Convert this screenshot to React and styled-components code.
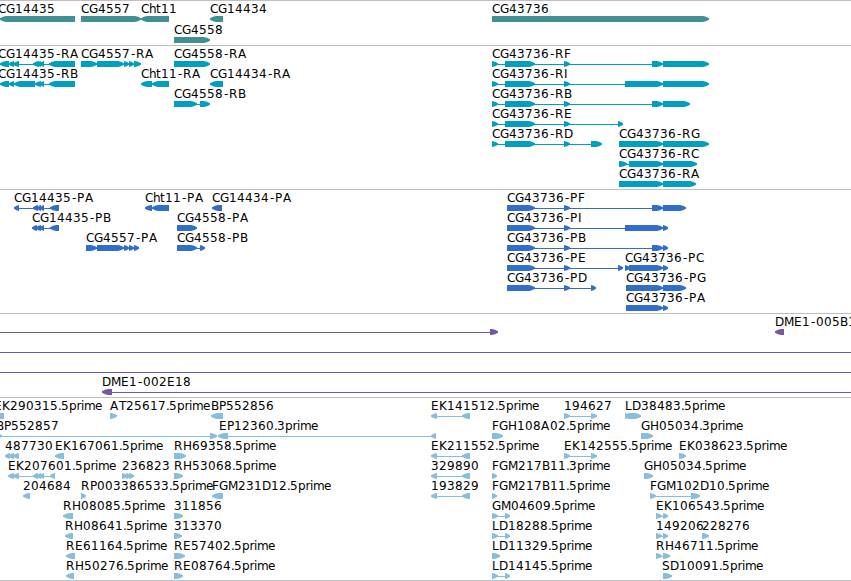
import React from "react";
import styled, { createGlobalStyle } from "styled-components";

const GlobalStyle = createGlobalStyle`
  html, body { margin: 0; padding: 0; background: #fff; overflow: hidden; }
`;

const Browser = styled.main`
  display: flex;
  flex-direction: column;
  width: 851px;
  height: 581px;
  overflow: hidden;
  background: #fff;
`;

const TrackPanel = styled.section`
  box-sizing: border-box;
  flex: 0 0 ${(p) => p.$height}px;
  border-top: 1px solid #bebebe;
  overflow: hidden;
`;

const TrackChart = styled.svg`
  display: block;
  color: ${(p) => p.$color};
`;

const FeatureLabel = styled.text`
  font-family: "DejaVu Sans", sans-serif;
  font-size: 12px;
  fill: #000;
  white-space: pre;
`;

const Connector = styled.rect`
  fill: currentColor;
  shape-rendering: crispEdges;
`;

const Segment = styled.polygon`
  fill: currentColor;
`;

// Whole-pixel glyph advances for the label font.
const ADVANCE = {
  A: 9, B: 8, C: 8, D: 9, E: 8, F: 7, G: 9, H: 9, K: 8, L: 7, M: 10, P: 7, R: 9, S: 8, T: 7,
  h: 7, t: 5, p: 7.5, r: 4.5, i: 3, m: 11, e: 7, ".": 3, "-": 6,
};

const glyphPositions = (text, start) => {
  let x = start;
  return [...text].map((c, i) => {
    const shift = c === "-" || (c !== "5" && text[i - 1] === "P" && i === text.length - 1) ? 1 : 0;
    const at = x + shift;
    x += ADVANCE[c] || 8;
    return at;
  }).join(" ");
};

const segmentPoints = (x0, x1, y, dir) => {
  const head = Math.min(x1 - x0, 6);
  const tip = dir === "R" ? x1 : x0;
  const tail = dir === "R" ? x0 : x1;
  const s = dir === "R" ? -1 : 1;
  return [
    [tail, y], [tip + s * head, y], [tip + s * head * 0.5, y + 0.7],
    [tip, y + 2.2], [tip, y + 3.8],
    [tip + s * head * 0.5, y + 5.3], [tip + s * head, y + 6], [tail, y + 6],
  ].map((p) => p.join(",")).join(" ");
};

// Feature: [row, label, label x, direction, segments, optional connector range]
const S = [[492, 498], [505, 535], [564, 570]];
const P = [[507, 535], [564, 570]];
const EK = [[431, 437], [462, 470]];

const TRACKS = [
  {
    id: "gene", height: 45, pitch: 21, color: "#3f8f94",
    features: [
      [0, "CG14435", -2, "L", [[0, 75]]],
      [0, "CG4557", 81, "R", [[81, 141]]],
      [0, "Cht11", 141, "L", [[141, 169]]],
      [1, "CG4558", 174, "R", [[174, 210]]],
      [0, "CG14434", 210, "L", [[210, 223]]],
      [0, "CG43736", 492, "R", [[492, 709]]],
    ],
  },
  {
    id: "transcript", height: 144, pitch: 20, color: "#009fc1",
    features: [
      [0, "CG14435-RA", -2, "L", [[0, 9], [9, 14], [13, 19], [33, 39], [37, 41], [40, 44], [49, 75]]],
      [1, "CG14435-RB", -2, "L", [[0, 9], [9, 14], [14, 35], [35, 41], [40, 44], [49, 75]]],
      [0, "CG4557-RA", 81, "R", [[81, 97], [97, 124], [124, 129], [129, 134], [134, 141]]],
      [1, "Cht11-RA", 141, "L", [[141, 152], [152, 169]]],
      [1, "CG14434-RA", 210, "L", [[210, 223]]],
      [0, "CG4558-RA", 174, "R", [[174, 210]]],
      [2, "CG4558-RB", 174, "R", [[174, 197], [200, 210]]],
      [0, "CG43736-RF", 492, "R", [...S, [652, 663], [663, 709]]],
      [1, "CG43736-RI", 492, "R", [...S, [625, 663], [663, 709]]],
      [2, "CG43736-RB", 492, "R", [...S, [652, 663], [663, 690]]],
      [3, "CG43736-RE", 492, "R", [...S, [618, 623]]],
      [4, "CG43736-RD", 492, "R", [...S, [591, 602]]],
      [4, "CG43736-RG", 619, "R", [[619, 663], [663, 709]]],
      [5, "CG43736-RC", 619, "R", [[619, 627], [629, 663], [663, 697]]],
      [6, "CG43736-RA", 619, "R", [[619, 663], [663, 696]]],
    ],
  },
  {
    id: "protein", height: 124, pitch: 20, color: "#316dcb",
    features: [
      [0, "CG14435-PA", 14, "L", [[14, 19], [33, 38], [37, 41], [40, 44], [50, 59]]],
      [1, "CG14435-PB", 32, "L", [[32, 37], [36, 41], [40, 44], [50, 59]]],
      [2, "CG4557-PA", 86, "R", [[86, 97], [97, 124], [124, 129], [129, 134], [134, 139]]],
      [0, "Cht11-PA", 145, "L", [[145, 152], [152, 169]]],
      [0, "CG14434-PA", 212, "L", [[212, 222]]],
      [1, "CG4558-PA", 177, "R", [[177, 197]]],
      [2, "CG4558-PB", 177, "R", [[177, 197], [200, 205]]],
      [0, "CG43736-PF", 507, "R", [...P, [652, 663], [663, 686]]],
      [1, "CG43736-PI", 507, "R", [...P, [625, 663], [663, 668]]],
      [2, "CG43736-PB", 507, "R", [...P, [652, 663], [663, 668]]],
      [3, "CG43736-PE", 507, "R", [...P, [618, 623]]],
      [4, "CG43736-PD", 507, "R", [...P, [591, 596]]],
      [3, "CG43736-PC", 625, "R", [[625, 630], [629, 663], [663, 668]]],
      [4, "CG43736-PG", 626, "R", [[626, 663], [663, 686]]],
      [5, "CG43736-PA", 626, "R", [[626, 663], [663, 668]]],
    ],
  },
  {
    id: "clone", height: 84, pitch: 20, color: "#7358aa",
    features: [
      [0, "", 0, "R", [[490, 498]], [0, 495]],
      [0, "DME1-005B1", 775, "L", [[775, 784]]],
      [1, "", 0, "R", [], [0, 851]],
      [2, "", 0, "R", [], [0, 851]],
      [3, "DME1-002E18", 102, "L", [[102, 112]], [104, 851]],
    ],
  },
  {
    id: "est", height: 183, pitch: 20, color: "#88bddd",
    features: [
      [0, "EK290315.5prime", -6, "L", [[-8, 4]]],
      [0, "AT25617.5prime", 110, "R", [[110, 117]]],
      [0, "BP552856", 211, "L", [[211, 223]]],
      [0, "EK141512.5prime", 431, "L", EK],
      [0, "194627", 564, "R", [[564, 570], [591, 597]]],
      [0, "LD38483.5prime", 625, "R", [[625, 630], [628, 641]]],
      [1, "BP552857", -4, "R", [[-4, 2], [210, 217]]],
      [1, "EP12360.3prime", 219, "L", [[218, 228], [431, 436]]],
      [1, "FGH108A02.5prime", 492, "R", [[492, 503]]],
      [1, "GH05034.3prime", 641, "R", [[641, 653]]],
      [2, "487730", 5, "L", [[5, 10], [9, 14], [13, 19]]],
      [2, "EK167061.5prime", 55, "L", [[55, 64]]],
      [2, "RH69358.5prime", 174, "R", [[174, 186]]],
      [2, "EK211552.5prime", 431, "L", EK],
      [2, "EK142555.5prime", 564, "R", [[564, 570], [591, 597]]],
      [2, "EK038623.5prime", 679, "R", [[679, 686]]],
      [3, "EK207601.5prime", 8, "L", [[8, 14], [13, 19], [33, 38], [37, 41], [40, 44], [50, 55]]],
      [3, "236823", 122, "R", [[122, 127], [126, 130], [129, 134]]],
      [3, "RH53068.5prime", 174, "R", [[174, 183]]],
      [3, "329890", 431, "L", EK],
      [3, "FGM217B11.3prime", 492, "R", [[492, 497]]],
      [3, "GH05034.5prime", 644, "R", [[644, 653]]],
      [4, "204684", 23, "L", [[23, 30]]],
      [4, "RP003386533.5prime", 81, "R", [[81, 86]]],
      [4, "FGM231D12.5prime", 212, "L", [[212, 223]]],
      [4, "193829", 431, "L", EK],
      [4, "FGM217B11.5prime", 492, "R", [[492, 497]]],
      [4, "FGM102D10.5prime", 650, "R", [[650, 656], [691, 700]]],
      [5, "RH08085.5prime", 63, "L", [[63, 73]]],
      [5, "311856", 174, "R", [[174, 183]]],
      [5, "GM04609.5prime", 492, "R", [[492, 498], [505, 510]]],
      [5, "EK106543.5prime", 656, "R", [[656, 662], [663, 668]]],
      [6, "RH08641.5prime", 65, "L", [[65, 73]]],
      [6, "313370", 174, "R", [[174, 182]]],
      [6, "LD18288.5prime", 492, "R", [[492, 498], [505, 510]]],
      [6, "149206", 656, "R", [[656, 662], [663, 668]]],
      [6, "228276", 702, "R", [[702, 709]]],
      [7, "RE61164.5prime", 66, "L", [[66, 75]]],
      [7, "RE57402.5prime", 174, "R", [[174, 185]]],
      [7, "LD11329.5prime", 492, "R", [[492, 500]]],
      [7, "RH46711.5prime", 656, "R", [[656, 662], [663, 670]]],
      [8, "RH50276.5prime", 66, "L", [[66, 74]]],
      [8, "RE08764.5prime", 174, "R", [[174, 183]]],
      [8, "LD14145.5prime", 492, "R", [[492, 498], [505, 510]]],
      [8, "SD10091.5prime", 662, "R", [[663, 672]]],
    ],
  },
];

function Feature({ feature, pitch }) {
  const [row, label, labelX, dir, segments, range] = feature;
  const top = row * pitch;
  const line = range || (segments.length > 1 && [segments[0][0] + 1, segments[segments.length - 1][1] - 1]);
  return (
    <g>
      {line && <Connector x={line[0]} y={top + 19} width={line[1] - line[0]} height={1} />}
      {segments.map(([x0, x1]) => (
        <Segment key={x0} points={segmentPoints(x0, x1, top + 16, dir)} />
      ))}
      {label && (
        <FeatureLabel x={glyphPositions(label, labelX)} y={top + 13}>{label}</FeatureLabel>
      )}
    </g>
  );
}

function Track({ track }) {
  const h = track.height - 1;
  return (
    <TrackPanel $height={track.height}>
      <TrackChart $color={track.color} width={851} height={h} viewBox={`0 1 851 ${h}`}>
        {track.features.map((f) => (
          <Feature key={`${f[0]}-${f[1]}`} feature={f} pitch={track.pitch} />
        ))}
      </TrackChart>
    </TrackPanel>
  );
}

export default function App() {
  return (
    <>
      <GlobalStyle />
      <Browser>
        {TRACKS.map((t) => <Track key={t.id} track={t} />)}
        <TrackPanel $height={1} />
      </Browser>
    </>
  );
}
